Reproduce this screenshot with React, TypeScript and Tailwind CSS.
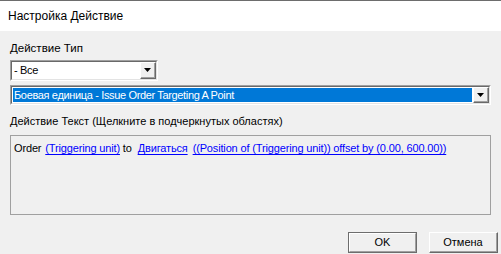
import React from "react";

const font = { fontFamily: '"Liberation Sans", Arial, sans-serif' };

const Arrow = () => (
  <svg width="7" height="4" viewBox="0 0 7 4">
    <path d="M0 0 H7 L3.5 4 Z" fill="#000" />
  </svg>
);

const DropButton = () => (
  <div className="w-[16px] self-stretch border border-t-white border-l-white border-b-[#696969] border-r-[#696969] bg-[#f0f0f0]">
    <div className="h-full flex items-center justify-center border-b border-r border-b-[#a0a0a0] border-r-[#a0a0a0]">
      <Arrow />
    </div>
  </div>
);

const Combo = ({ text, selected, className }: { text: string; selected?: boolean; className: string }) => (
  <div className={`border border-t-[#a0a0a0] border-l-[#a0a0a0] border-b-white border-r-white ${className}`}>
    <div className="h-full flex border border-t-[#696969] border-l-[#696969] border-b-[#e3e3e3] border-r-[#e3e3e3] bg-white">
      <div className="flex-1 flex items-center p-[1px]">
        <div
          className={`h-full w-full flex items-center px-[1px] text-[11px] tracking-[-0.35px] leading-none ${
            selected ? "bg-[#0078d7] text-white" : "text-black"
          }`}
        >
          {text}
        </div>
      </div>
      <DropButton />
    </div>
  </div>
);

const Link = ({ children }: { children: React.ReactNode }) => (
  <span className="text-[#0000ff] underline underline-offset-[2px]">{children}</span>
);

export default function App() {
  return (
    <div className="w-[501px] h-[254px] flex flex-col bg-[#f0f0f0] border-t border-t-[#6d6d6d] overflow-hidden" style={font}>
      <div className="h-[30px] bg-white flex items-center pl-[8px] text-[12px] text-black">
        Настройка Действие
      </div>
      <div className="flex-1 flex flex-col px-[10px] pt-[10px] text-[11px] text-black">
        <div className="h-[14px] leading-[14px] text-[11.5px]">Действие Тип</div>
        <Combo text="- Все" className="mt-[5px] w-[148px] h-[21px]" />
        <Combo
          text="Боевая единица - Issue Order Targeting A Point"
          selected
          className="mt-[4px] w-[481px] h-[20px]"
        />
        <div className="mt-[9px] h-[14px] leading-[14px]">
          Действие Текст (Щелкните в подчеркнутых областях)
        </div>
        <div className="mt-[7px] w-[481px] h-[80px] border border-[#a0a0a0] px-[3px] pt-[5px] leading-[15px] whitespace-nowrap tracking-[-0.15px]">
          Order <span className="ml-[1px]" /><Link>(Triggering unit)</Link> to <span className="ml-[3px]" /><Link>Двигаться</Link>
          <span className="ml-[5px]" />
          <Link>((Position of (Triggering unit)) offset by (0.00, 600.00))</Link>
        </div>
        <div className="mt-[17px] flex justify-end gap-[12px] -mr-[7px]">
          <button className="w-[69px] h-[21px] border border-[#6d6d6d] bg-[#f0f0f0] p-0">
            <div className="h-full flex items-center justify-center border border-t-white border-l-white border-b-[#a0a0a0] border-r-[#a0a0a0]">
              OK
            </div>
          </button>
          <button className="w-[69px] h-[21px] border border-t-white border-l-white border-b-[#696969] border-r-[#696969] bg-[#f0f0f0] p-0">
            <div className="h-full flex items-center justify-center border-b border-r border-b-[#a0a0a0] border-r-[#a0a0a0]">
              Отмена
            </div>
          </button>
        </div>
      </div>
    </div>
  );
}
